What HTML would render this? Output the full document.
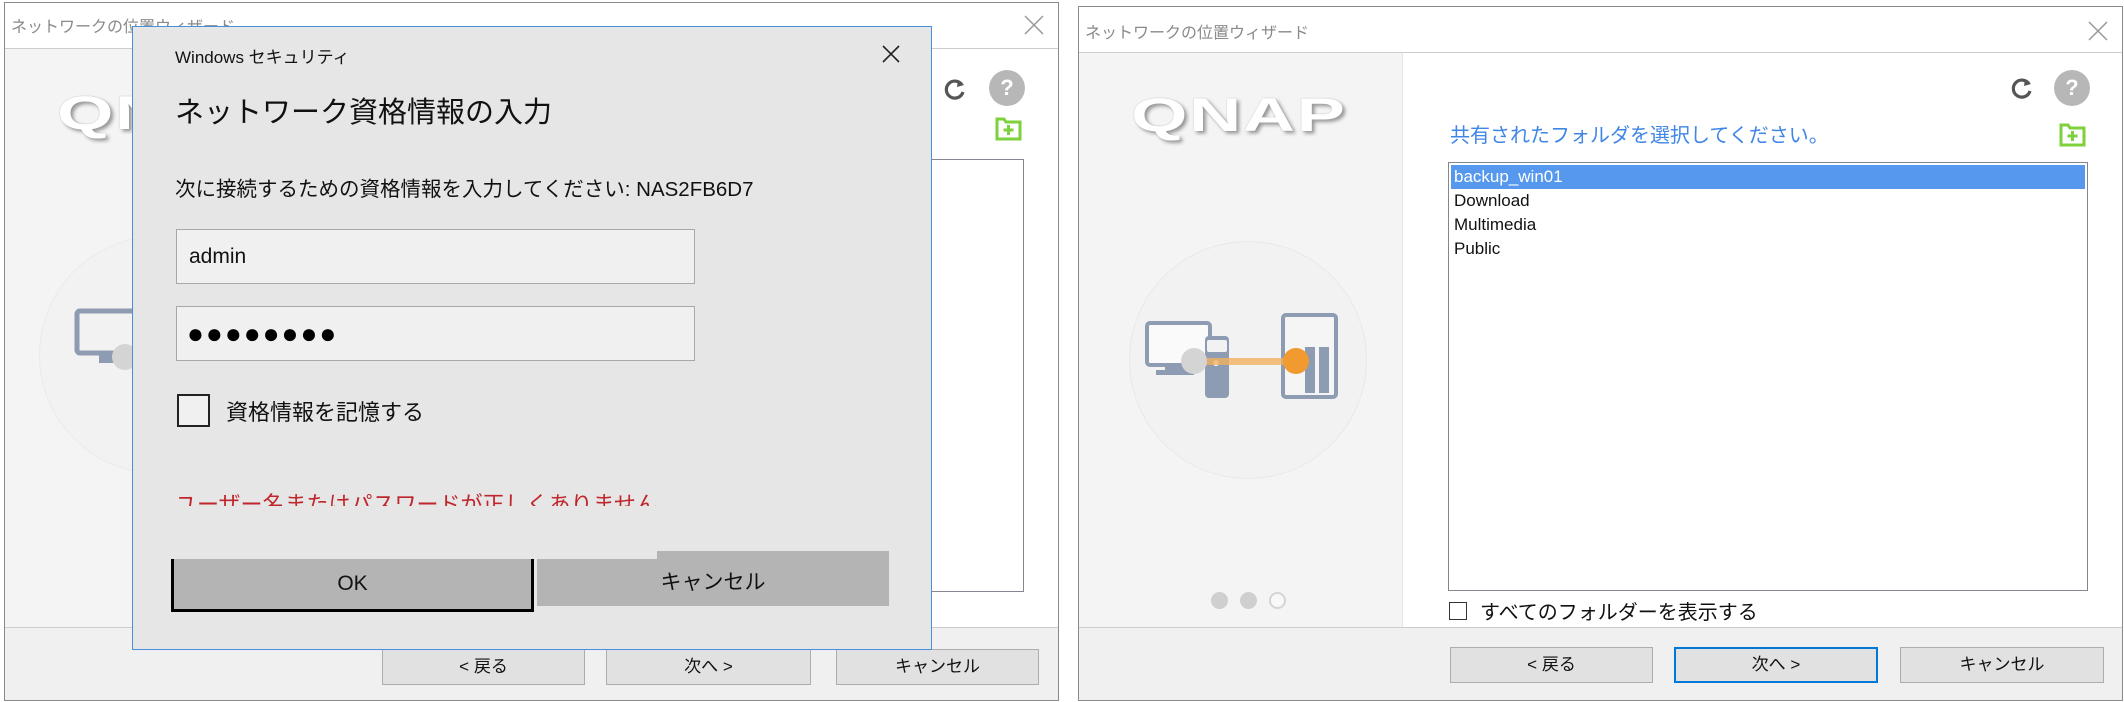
<!DOCTYPE html>
<html><head><meta charset="utf-8"><style>
*{margin:0;padding:0;box-sizing:border-box}
body{width:2124px;height:702px;background:#fff;position:relative;overflow:hidden;font-family:"Liberation Sans","Noto Sans CJK JP",sans-serif}
.abs{position:absolute}
.win{position:absolute;border:1px solid #8a8a8a;background:#fff;overflow:hidden}
.title{position:absolute;left:6px;font-size:16px;color:#8a8a8a;white-space:nowrap}
.lp{position:absolute;left:0;width:324px;background:#f4f4f4;border-top:1px solid #ccc;border-right:1px solid #e4e4e4}
.rp{position:absolute;left:324px;right:0;background:#fff;border-top:1px solid #ccc}
.foot{position:absolute;left:0;right:0;bottom:0;background:#f0f0f0;border-top:1px solid #ccc}
.btn{position:absolute;height:36px;background:#e1e1e1;border:1px solid #adadad;font-size:17px;text-align:center;line-height:34px;color:#111}
.qnap{position:absolute;font-family:"Liberation Sans",sans-serif;font-weight:bold;font-size:50px;line-height:50px;color:#fff;letter-spacing:1px;text-shadow:2px 3px 3px #999,0 0 1px #aaa;transform-origin:0 0;transform:scale(1.45,0.95)}
</style></head><body>

<!-- LEFT WINDOW -->
<div class="win" style="left:4px;top:2px;width:1055px;height:699px">
  <div class="title" style="top:10px">ネットワークの位置ウィザード</div>
  <svg class="abs" style="right:14px;top:12px" width="20" height="20"><path d="M1 1L19 19M19 1L1 19" stroke="#999" stroke-width="1.5"/></svg>
  <div class="lp" style="top:45px;height:582px"></div>
  <div class="rp" style="top:45px;height:582px"></div>
  <div class="qnap" style="left:52px;top:86px">QNAP</div>
  <div class="abs" style="left:34px;top:233px;width:238px;height:238px;border-radius:50%;background:#f2f2f2;border:1px solid #eaeaea"></div>
  <svg class="abs" style="left:64px;top:300px" width="140" height="90"><rect x="8" y="8" width="66" height="42" rx="3" fill="none" stroke="#8d9bb3" stroke-width="5"/><rect x="30" y="52" width="22" height="8" fill="#8d9bb3"/><circle cx="56" cy="54" r="13" fill="#d4d4d4"/></svg>
  <svg class="abs" style="left:937px;top:73px" width="26" height="26" viewBox="0 0 26 26"><path d="M20 9 A8.5 8.5 0 1 0 21 16" fill="none" stroke="#555" stroke-width="3.2"/><path d="M16 4 L22 9 L15 11 Z" fill="#555"/></svg>
  <div class="abs" style="left:984px;top:67px;width:36px;height:36px;border-radius:50%;background:#b7b7b7;color:#fff;font-weight:bold;font-size:22px;text-align:center;line-height:36px">?</div>
  <svg class="abs" style="left:990px;top:112px" width="28" height="26" viewBox="0 0 28 26"><path d="M2 4 H9 L11 7 H25 V24 H2 Z" fill="none" stroke="#7ed03c" stroke-width="3"/><path d="M13.5 10 V20 M8.5 15 H18.5" stroke="#7ed03c" stroke-width="3"/></svg>
  <div class="abs" style="left:700px;top:156px;width:319px;height:433px;border:1px solid #828790;background:#fff"></div>
  <div class="foot" style="height:73px"></div>
  <div class="btn" style="left:377px;top:646px;width:203px">&lt; 戻る</div>
  <div class="btn" style="left:601px;top:646px;width:205px">次へ &gt;</div>
  <div class="btn" style="left:831px;top:646px;width:203px">キャンセル</div>
</div>

<!-- DIALOG -->
<div class="abs" style="left:132px;top:26px;width:800px;height:624px;background:#e6e6e6;border:1px solid #4a8fdc">
  <div class="abs" style="left:42px;top:16px;font-size:17px;color:#111">Windows セキュリティ</div>
  <svg class="abs" style="left:749px;top:18px" width="18" height="18"><path d="M1 1L17 17M17 1L1 17" stroke="#222" stroke-width="1.6"/></svg>
  <div class="abs" style="left:42px;top:62px;font-size:29px;color:#111;white-space:nowrap">ネットワーク資格情報の入力</div>
  <div class="abs" style="left:42px;top:145px;font-size:20.5px;color:#111;white-space:nowrap">次に接続するための資格情報を入力してください: NAS2FB6D7</div>
  <div class="abs" style="left:43px;top:202px;width:519px;height:55px;background:#f0f0f0;border:1px solid #a8a8a8;font-size:21px;line-height:53px;padding-left:12px;color:#111">admin</div>
  <div class="abs" style="left:43px;top:279px;width:519px;height:55px;background:#f0f0f0;border:1px solid #a8a8a8;font-size:28px;line-height:53px;padding-left:10px;color:#000;letter-spacing:2px">●●●●●●●●</div>
  <div class="abs" style="left:44px;top:367px;width:33px;height:33px;border:2px solid #222;background:#f0f0f0"></div>
  <div class="abs" style="left:93px;top:368px;font-size:22px;color:#111;white-space:nowrap">資格情報を記憶する</div>
  <div class="abs" style="left:42px;top:463px;width:600px;height:16px;overflow:hidden"><div style="font-size:22px;color:#c0272d;white-space:nowrap;margin-top:-3px">ユーザー名またはパスワードが正しくありません。</div></div>
  <div class="abs" style="left:524px;top:524px;width:232px;height:55px;background:#b4b4b4"></div>
  <div class="abs" style="left:404px;top:532px;width:352px;height:47px;background:#b4b4b4;text-align:center;font-size:21px;line-height:47px;color:#111">キャンセル</div>
  <div class="abs" style="left:38px;top:532px;width:363px;height:53px;background:#b4b4b4;border:3px solid #000;border-top:none;text-align:center;font-size:21px;line-height:50px;color:#111">OK</div>
</div>

<!-- RIGHT WINDOW -->
<div class="win" style="left:1078px;top:6px;width:1045px;height:695px">
  <div class="title" style="top:12px">ネットワークの位置ウィザード</div>
  <svg class="abs" style="right:14px;top:14px" width="20" height="20"><path d="M1 1L19 19M19 1L1 19" stroke="#999" stroke-width="1.5"/></svg>
  <div class="lp" style="top:45px;height:577px"></div>
  <div class="rp" style="top:45px;height:577px"></div>
  <div class="qnap" style="left:52px;top:84px">QNAP</div>
  <div class="abs" style="left:50px;top:234px;width:238px;height:238px;border-radius:50%;background:#f2f2f2;border:1px solid #e8e8e8"></div>
  <svg class="abs" style="left:42px;top:300px" width="240" height="100">
    <rect x="26" y="16" width="63" height="42" rx="3" fill="#fafafa" stroke="#8d9bb3" stroke-width="4"/>
    <rect x="44" y="58" width="22" height="6" fill="#8d9bb3"/><rect x="35" y="63" width="38" height="5" fill="#8d9bb3"/>
    <rect x="84" y="29" width="24" height="62" rx="4" fill="#8d9bb3"/><rect x="86" y="33" width="20" height="12" rx="2" fill="#f2f2f2"/>
    <circle cx="95" cy="56" r="3" fill="#fff"/>
    <rect x="162" y="8" width="53" height="82" rx="3" fill="#f5f5f5" stroke="#8d9bb3" stroke-width="4"/>
    <rect x="184" y="40" width="10" height="46" fill="#8d9bb3"/><rect x="198" y="40" width="10" height="46" fill="#8d9bb3"/>
    <rect x="73" y="51" width="102" height="7" fill="#f0b060" opacity="0.8"/>
    <circle cx="73" cy="54" r="13" fill="#d4d4d4"/>
    <circle cx="175" cy="54" r="13" fill="#f09a30"/>
  </svg>
  <div class="abs" style="left:132px;top:585px;width:17px;height:17px;border-radius:50%;background:#cfcfcf"></div>
  <div class="abs" style="left:161px;top:585px;width:17px;height:17px;border-radius:50%;background:#cfcfcf"></div>
  <div class="abs" style="left:190px;top:585px;width:17px;height:17px;border-radius:50%;background:#f8f8f8;border:2px solid #d4d4d4"></div>

  <svg class="abs" style="left:930px;top:68px" width="26" height="26" viewBox="0 0 26 26"><path d="M20 9 A8.5 8.5 0 1 0 21 16" fill="none" stroke="#555" stroke-width="3.2"/><path d="M16 4 L22 9 L15 11 Z" fill="#555"/></svg>
  <div class="abs" style="left:975px;top:63px;width:36px;height:36px;border-radius:50%;background:#b7b7b7;color:#fff;font-weight:bold;font-size:22px;text-align:center;line-height:36px">?</div>
  <div class="abs" style="left:371px;top:112px;font-size:20px;color:#3f86e6;white-space:nowrap">共有されたフォルダを選択してください。</div>
  <svg class="abs" style="left:980px;top:114px" width="28" height="26" viewBox="0 0 28 26"><path d="M2 4 H9 L11 7 H25 V24 H2 Z" fill="none" stroke="#7ed03c" stroke-width="3"/><path d="M13.5 10 V20 M8.5 15 H18.5" stroke="#7ed03c" stroke-width="3"/></svg>
  <div class="abs" style="left:369px;top:155px;width:640px;height:429px;border:1px solid #828790;background:#fff;font-size:17px;color:#111;line-height:24px">
    <div style="margin:2px 2px 0;background:#5598ee;color:#fff;padding-left:3px;height:24px">backup_win01</div>
    <div style="padding-left:5px">Download</div>
    <div style="padding-left:5px">Multimedia</div>
    <div style="padding-left:5px">Public</div>
  </div>
  <div class="abs" style="left:370px;top:595px;width:18px;height:18px;border:1px solid #333;background:#fff"></div>
  <div class="abs" style="left:401px;top:589px;font-size:20px;color:#111;white-space:nowrap">すべてのフォルダーを表示する</div>
  <div class="foot" style="height:73px"></div>
  <div class="btn" style="left:371px;top:640px;width:203px">&lt; 戻る</div>
  <div class="btn" style="left:595px;top:640px;width:204px;border:2px solid #0078d7;line-height:32px">次へ &gt;</div>
  <div class="btn" style="left:821px;top:640px;width:204px">キャンセル</div>
</div>
</body></html>
